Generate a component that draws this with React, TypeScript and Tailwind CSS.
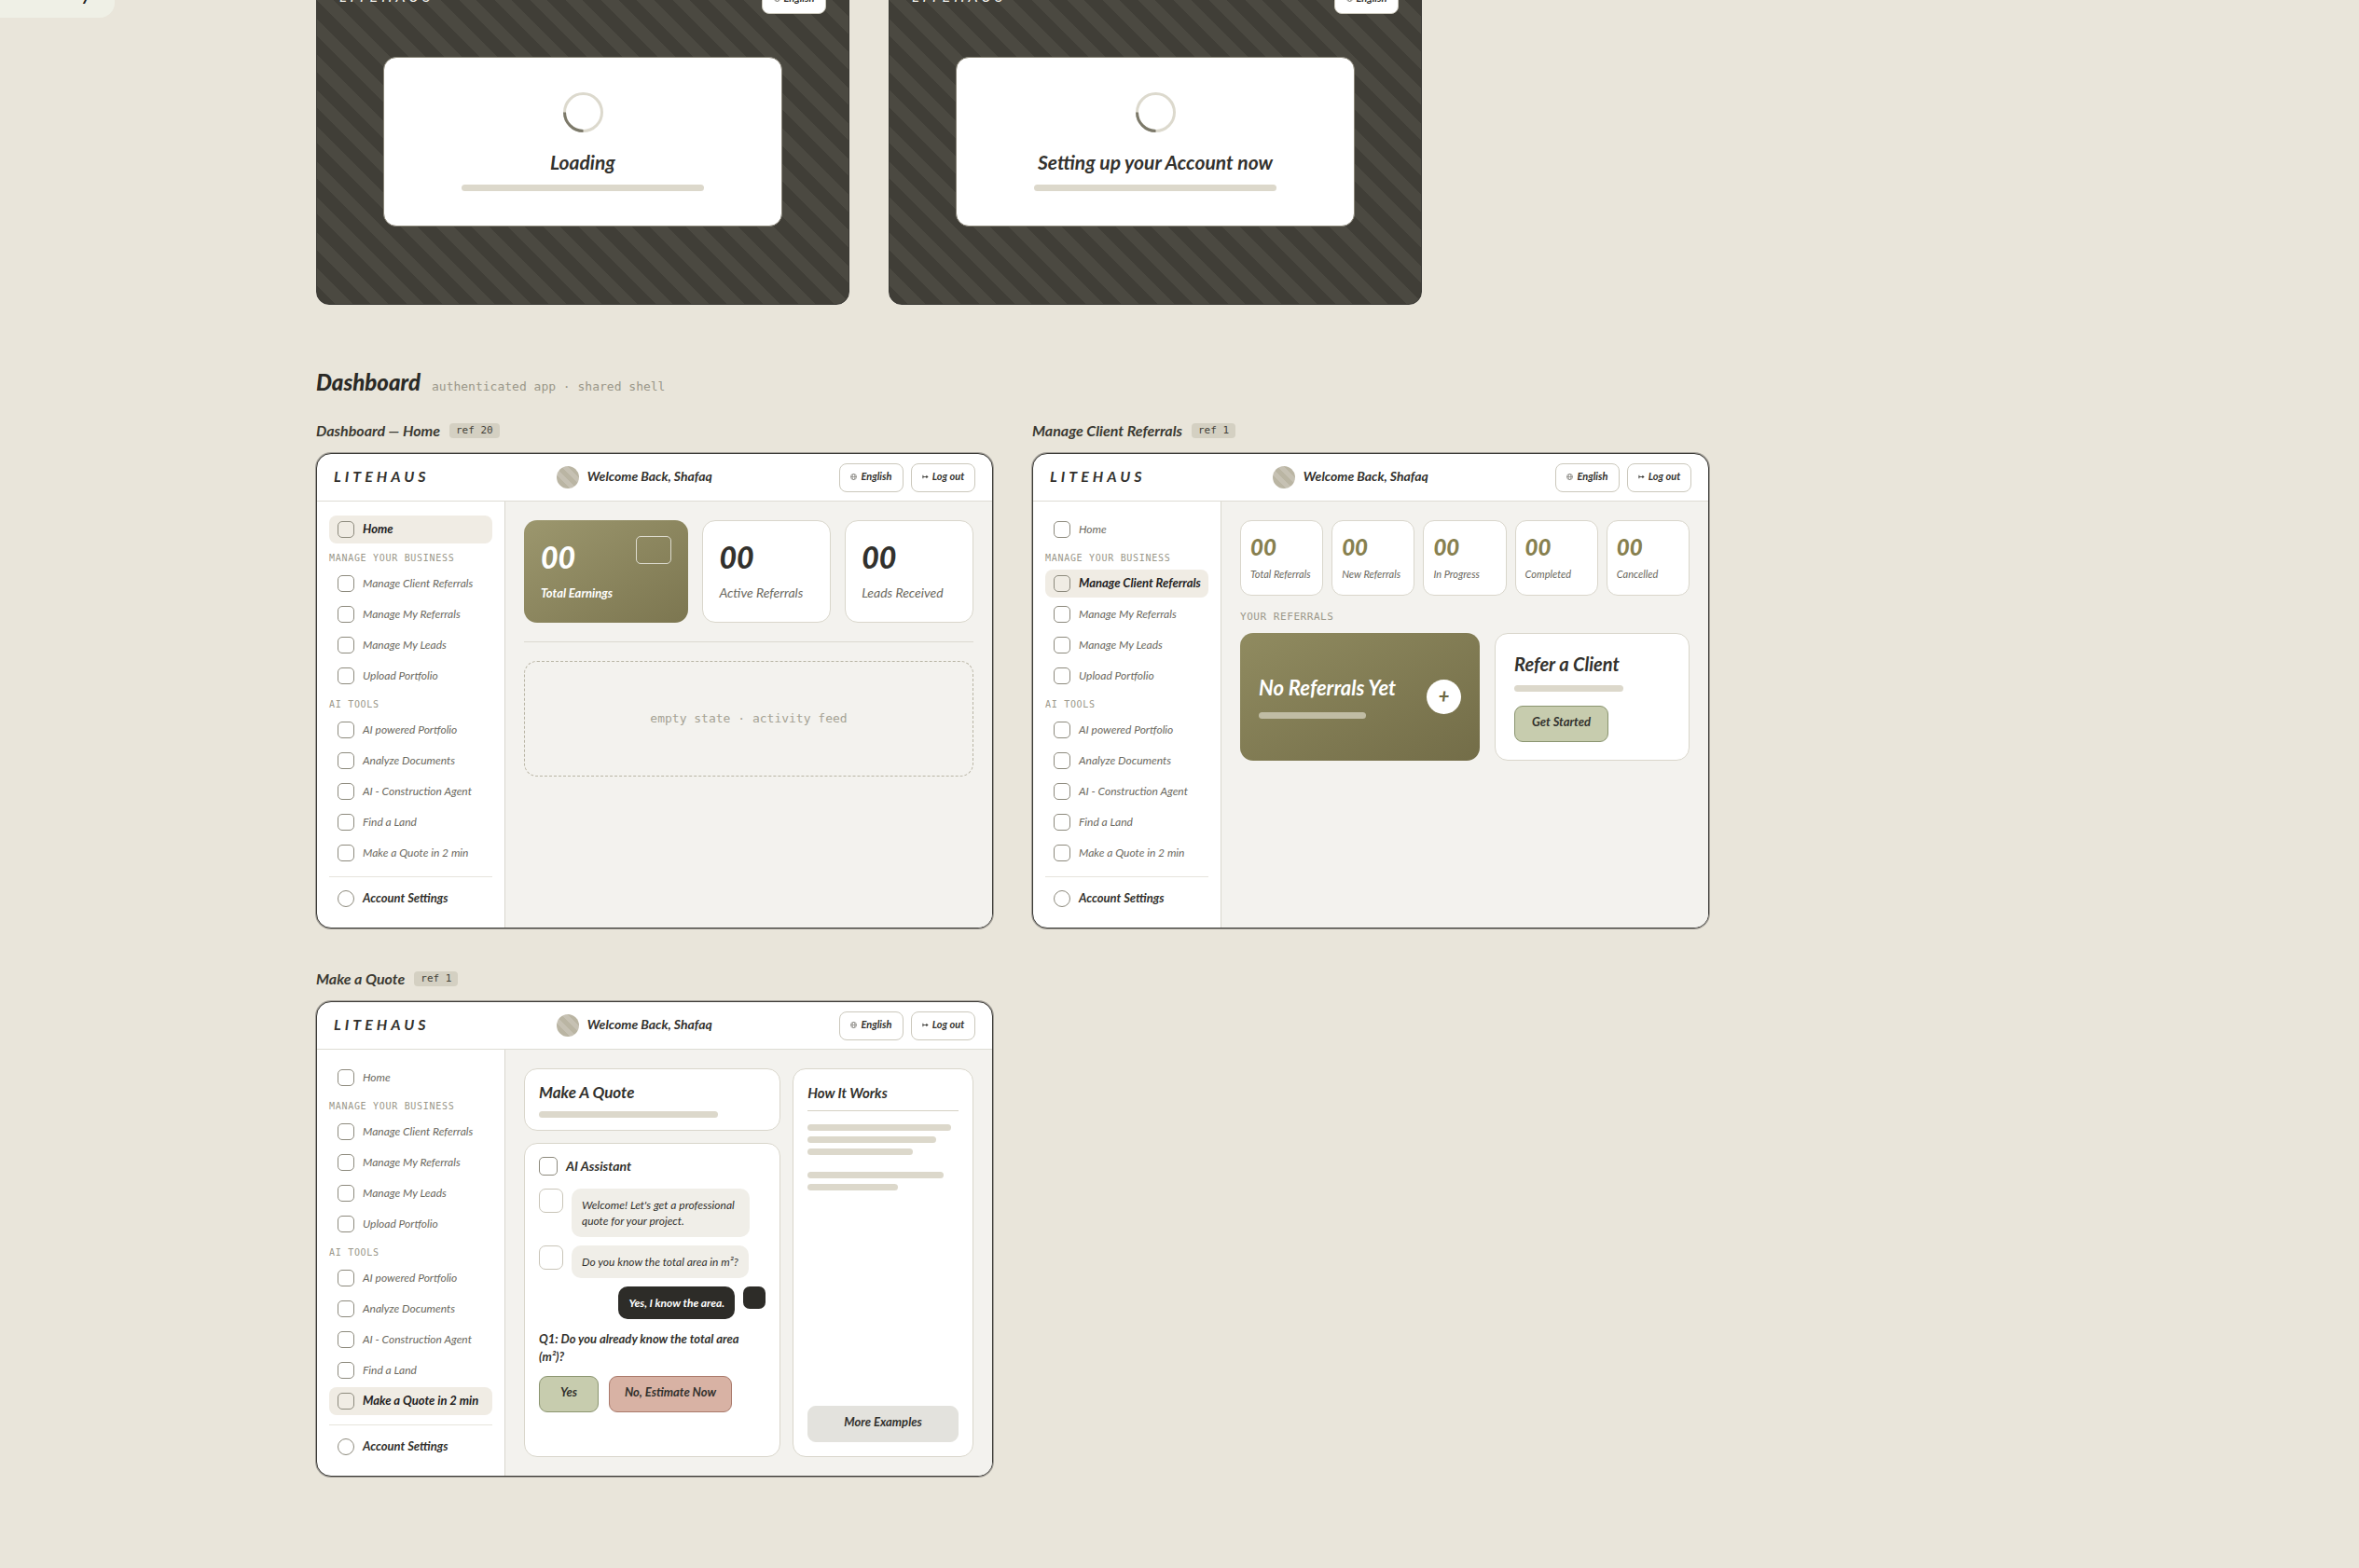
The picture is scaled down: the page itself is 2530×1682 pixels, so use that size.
import type { ReactNode } from 'react'
import clsx from 'clsx'

const BUSINESS = ['Manage Client Referrals', 'Manage My Referrals', 'Manage My Leads', 'Upload Portfolio']
const AI_TOOLS = ['AI powered Portfolio', 'Analyze Documents', 'AI - Construction Agent', 'Find a Land', 'Make a Quote in 2 min']
const REFERRAL_STATS = ['Total Referrals', 'New Referrals', 'In Progress', 'Completed', 'Cancelled']

export default function App() {
  return (
    <div className="relative min-h-screen overflow-hidden bg-[#e9e5da] pb-24 font-[Lato,'Open_Sans',sans-serif] italic text-[#32312d]">
      {/* Floating note, mostly scrolled out of view */}
      <aside className="absolute -top-8 left-0 h-[51px] w-[123px] rounded-br-2xl bg-[#eff0e6] pt-[14px] pl-[88px] text-lg leading-6 font-bold text-[#22211e]">
        y
      </aside>

      <main className="pl-[339px] pr-10">
        <section className="-mt-10 flex flex-wrap gap-[42px]">
          <LoadingFrame title="Loading" />
          <LoadingFrame title="Setting up your Account now" />
        </section>

        <section className="mt-[66px]">
          <header className="mb-[23px] flex h-[34px] items-baseline gap-3">
            <h1 className="text-2xl leading-[34px] font-black text-[#2b2a26]">Dashboard</h1>
            <p className="font-['DejaVu_Sans_Mono',monospace] text-[13px] not-italic text-[#9a9789]">authenticated app · shared shell</p>
          </header>

          <div className="flex flex-wrap gap-[42px]">
            <Frame title="Dashboard — Home" refs="ref 20" active="Home">
              <HomeScreen />
            </Frame>
            <Frame title="Manage Client Referrals" refs="ref 1" active="Manage Client Referrals">
              <ReferralsScreen />
            </Frame>
            <Frame title="Make a Quote" refs="ref 1" active="Make a Quote in 2 min">
              <QuoteScreen />
            </Frame>
          </div>
        </section>
      </main>
    </div>
  )
}

function LoadingFrame({ title }: { title: string }) {
  return (
    <article className="w-full max-w-[572px] rounded-[14px] border border-[#3b3a36] bg-[repeating-linear-gradient(45deg,#403e37_0_14px,#4b4941_14px_27px)] pt-[23px] pb-[83px]">
      <header className="flex items-start justify-between px-6">
        <span className="text-base leading-6 tracking-[0.25em] text-[#f3f2ee]">LITEHAUS</span>
        <PillButton icon={<GlobeIcon />}>English</PillButton>
      </header>
      <div className="mx-auto mt-[46px] flex w-3/4 flex-col items-center rounded-[14px] border border-[#8b877a] bg-white py-[37px]">
        <svg className="size-[43px]" viewBox="0 0 43 43" fill="none" strokeWidth="3">
          <circle cx="21.5" cy="21.5" r="20" stroke="#dcd9cd" />
          <path d="M21.5 41.5A20 20 0 0 1 1.5 21.5" stroke="#7c796a" />
        </svg>
        <h2 className="mt-[18px] text-[21px] leading-7 font-bold">{title}</h2>
        <Bar className="mt-[10px] w-[61%]" />
      </div>
    </article>
  )
}

function Frame({ title, refs, active, children }: { title: string; refs: string; active: string; children: ReactNode }) {
  return (
    <article className="w-full max-w-[726px]">
      <div className="mb-3 flex h-6 items-center gap-[10px]">
        <h2 className="text-base font-bold text-[#3b3a32]">{title}</h2>
        <span className="rounded bg-[#d4d0c2] px-[7px] font-['DejaVu_Sans_Mono',monospace] text-[11px] leading-4 not-italic text-[#45433a]">{refs}</span>
      </div>
      <div className="overflow-hidden rounded-[16px] border border-[#3b3a36] bg-white ring-1 ring-[#3b3a36]/40">
        <header className="flex h-[51px] items-center justify-between border-b border-[#dedcd4] px-[18px]">
          <span className="pb-[3px] text-base leading-6 font-bold tracking-[0.25em]">LITEHAUS</span>
          <div className="flex items-center gap-[9px]">
            <span className="size-6 rounded-full bg-[repeating-linear-gradient(45deg,#c6c1b3_0_5px,#bab5a3_5px_10px)]" />
            <span className="pb-[3px] text-sm font-bold">Welcome Back, Shafaq</span>
          </div>
          <div className="flex gap-2">
            <PillButton icon={<GlobeIcon />}>English</PillButton>
            <PillButton icon={<ExitIcon />}>Log out</PillButton>
          </div>
        </header>
        <div className="flex">
          <Sidebar active={active} />
          <div className="flex min-w-0 flex-1 flex-col bg-[#f3f2ee] p-5">{children}</div>
        </div>
      </div>
    </article>
  )
}

function Sidebar({ active }: { active: string }) {
  return (
    <nav className="flex w-[202px] shrink-0 flex-col gap-[3px] border-r border-[#d9d7ce] px-[13px] pt-[15px] pb-4">
      <NavItem label="Home" active={active === 'Home'} />
      <NavHeading>MANAGE YOUR BUSINESS</NavHeading>
      {BUSINESS.map(label => <NavItem key={label} label={label} active={active === label} />)}
      <NavHeading>AI TOOLS</NavHeading>
      {AI_TOOLS.map(label => <NavItem key={label} label={label} active={active === label} />)}
      <div className="mt-[7px] border-t border-[#e6e4dc] pt-2">
        <a href="#settings" className="flex h-[30px] items-center gap-[9px] px-[9px] text-[13px] font-bold">
          <span className="size-[18px] rounded-full border border-[#8d8a7d] bg-white" />
          Account Settings
        </a>
      </div>
    </nav>
  )
}

function NavHeading({ children }: { children: ReactNode }) {
  return (
    <h3 className="h-[22px] pt-1 font-['DejaVu_Sans_Mono',monospace] text-[10px] leading-[18px] tracking-[0.07em] whitespace-nowrap not-italic text-[#9a9789]">{children}</h3>
  )
}

function NavItem({ label, active }: { label: string; active: boolean }) {
  return (
    <a href="#nav" className={clsx('flex h-[30px] items-center gap-[9px] rounded-lg px-[9px] whitespace-nowrap', active ? 'bg-[#f0ece4] text-[13px] font-bold text-[#22211e]' : 'text-xs text-[#6b6960]')}>
      <span className="size-[18px] shrink-0 rounded-[5px] border border-[#8d8a7d]" />
      {label}
    </a>
  )
}

function HomeScreen() {
  return (
    <>
      <div className="grid grid-cols-[1.28fr_1fr_1fr] gap-[15px]">
        <div className="relative h-[110px] rounded-[14px] bg-linear-to-br from-[#9c976e] to-[#7c7650] px-[18px] pt-5 text-white">
          <Stat value="00" label="Total Earnings" />
          <span className="absolute top-[17px] right-[18px] h-[30px] w-[38px] rounded-[5px] border border-white/70" />
        </div>
        <div className="h-[110px] rounded-[14px] border border-[#d9d6cb] bg-white px-[17px] pt-[19px]">
          <Stat value="00" label="Active Referrals" muted />
        </div>
        <div className="h-[110px] rounded-[14px] border border-[#d9d6cb] bg-white px-[17px] pt-[19px]">
          <Stat value="00" label="Leads Received" muted />
        </div>
      </div>
      <hr className="my-5 border-[#dcd9d0]" />
      <div className="flex h-[124px] items-center justify-center rounded-[14px] border border-dashed border-[#b9b5a5] font-['DejaVu_Sans_Mono',monospace] text-[13px] not-italic text-[#a5a294]">
        empty state · activity feed
      </div>
    </>
  )
}

function Stat({ value, label, muted }: { value: string; label: string; muted?: boolean }) {
  return (
    <>
      <div className="text-[32px] leading-10 font-black">{value}</div>
      <div className={clsx('mt-1 leading-7', muted ? 'text-sm text-[#6b6960]' : 'text-[13px] font-bold')}>{label}</div>
    </>
  )
}

function ReferralsScreen() {
  return (
    <>
      <div className="grid grid-cols-5 gap-[9px]">
        {REFERRAL_STATS.map(label => (
          <div key={label} className="h-[81px] rounded-[12px] border border-[#d9d6cb] bg-white px-[10px] pt-[13px]">
            <div className="text-2xl leading-[30px] font-black text-[#87804f]">00</div>
            <div className="mt-[6px] text-[11px] leading-4 whitespace-nowrap text-[#6b6960]">{label}</div>
          </div>
        ))}
      </div>
      <h3 className="mt-[15px] mb-[9px] font-['DejaVu_Sans_Mono',monospace] text-[11px] leading-4 tracking-wider not-italic text-[#9a9789]">YOUR REFERRALS</h3>
      <div className="grid grid-cols-[1.23fr_1fr] gap-4">
        <div className="flex h-[137px] items-center justify-between rounded-[14px] bg-linear-to-br from-[#908b60] to-[#736d48] px-5">
          <div className="w-36">
            <h4 className="text-[22px] leading-7 font-bold whitespace-nowrap text-white">No Referrals Yet</h4>
            <span className="mt-3 block h-[7px] w-4/5 rounded bg-[#c0bca4]" />
          </div>
          <button aria-label="Add referral" className="flex size-[37px] items-center justify-center rounded-full bg-white pb-1 text-xl leading-6 font-black text-[#6c6741]">+</button>
        </div>
        <div className="flex flex-col items-start rounded-[14px] border border-[#d9d6cb] bg-white px-5 py-[18px]">
          <h4 className="text-[20px] leading-7 font-bold">Refer a Client</h4>
          <Bar className="mt-[9px] w-[70%]" />
          <ActionButton className="mt-[15px] w-[101px] border-[#8b9570] bg-[#c7ccae]">Get Started</ActionButton>
        </div>
      </div>
    </>
  )
}

function QuoteScreen() {
  return (
    <div className="grid flex-1 grid-cols-[1.42fr_1fr] gap-[13px]">
      <div className="flex flex-col gap-[13px]">
        <div className="h-[67px] rounded-[14px] border border-[#d9d6cb] bg-white px-[15px] pt-[11px]">
          <h4 className="text-[17px] leading-7 font-bold">Make A Quote</h4>
          <Bar className="mt-[6px] w-[79%]" />
        </div>
        <div className="flex-1 rounded-[14px] border border-[#d9d6cb] bg-white px-[15px] pt-[14px]">
          <div className="mb-[14px] flex h-5 items-center gap-[9px] text-sm font-bold">
            <span className="size-5 rounded-[5px] border border-[#8d8a7d]" />
            AI Assistant
          </div>
          <div className="flex flex-col gap-[9px] text-xs leading-[17px]">
            <div className="flex gap-[9px]">
              <span className="size-[26px] shrink-0 rounded-[7px] border border-[#c9c5b8]" />
              <p className="w-[191px] rounded-[10px] bg-[#f0eee8] px-[11px] py-[9px]">Welcome! Let's get a professional quote for your project.</p>
            </div>
            <div className="flex gap-[9px]">
              <span className="size-[26px] shrink-0 rounded-[7px] border border-[#c9c5b8]" />
              <p className="rounded-[10px] bg-[#f0eee8] px-[11px] py-[9px]">Do you know the total area in m²?</p>
            </div>
            <div className="flex justify-end gap-[9px]">
              <p className="rounded-[10px] bg-[#2d2c28] px-[11px] py-[9px] font-bold text-white">Yes, I know the area.</p>
              <span className="size-6 shrink-0 rounded-[7px] bg-[#2d2c28]" />
            </div>
          </div>
          <p className="mt-3 max-w-[225px] text-[13px] leading-[19px] font-bold">Q1: Do you already know the total area (m²)?</p>
          <div className="mt-[11px] flex gap-[11px]">
            <ActionButton className="w-16 border-[#8b9570] bg-[#c7ccae]">Yes</ActionButton>
            <ActionButton className="w-[132px] border-[#a9796a] bg-[#d8b2a4]">No, Estimate Now</ActionButton>
          </div>
        </div>
      </div>
      <div className="flex flex-col rounded-[14px] border border-[#d9d6cb] bg-white px-[15px] pt-[11px] pb-[15px]">
        <h4 className="text-[15px] leading-7 font-bold">How It Works</h4>
        <hr className="mt-[5px] mb-[14px] border-[#d5d1c4]" />
        <div className="flex flex-col gap-[6px]">
          <Bar className="w-[95%]" />
          <Bar className="w-[85%]" />
          <Bar className="w-[70%]" />
        </div>
        <div className="mt-[18px] flex flex-col gap-[6px]">
          <Bar className="w-[90%]" />
          <Bar className="w-[60%]" />
        </div>
        <ActionButton className="mt-auto w-full border-[#e3e2dd] bg-[#e3e2dd]">More Examples</ActionButton>
      </div>
    </div>
  )
}

function Bar({ className }: { className: string }) {
  return <div className={clsx('h-[7px] rounded bg-[#dcd8cb]', className)} />
}

function ActionButton({ className, children }: { className: string; children: ReactNode }) {
  return <button className={clsx('h-[39px] rounded-[9px] border pb-1 text-[13px] font-bold whitespace-nowrap italic', className)}>{children}</button>
}

function PillButton({ icon, children }: { icon: ReactNode; children: ReactNode }) {
  return (
    <button className="flex h-[31px] w-[69px] items-center justify-center gap-1 rounded-lg border border-[#cbc8bc] bg-white pb-[2px] text-[11px] font-bold whitespace-nowrap text-[#32312d] italic">
      {icon}
      {children}
    </button>
  )
}

function GlobeIcon() {
  return (
    <svg className="size-[7px]" viewBox="0 0 8 8" fill="none" stroke="#55534b" strokeWidth="0.6">
      <circle cx="4" cy="4" r="3.5" />
      <ellipse cx="4" cy="4" rx="1.7" ry="3.5" />
      <path d="M.5 4h7" />
    </svg>
  )
}

function ExitIcon() {
  return (
    <svg className="size-[7px]" viewBox="0 0 8 8" fill="none" stroke="#32312d">
      <path d="M1 2v4M1 4h5" />
      <path d="M5 2l2.6 2L5 6z" fill="#32312d" stroke="none" />
    </svg>
  )
}
